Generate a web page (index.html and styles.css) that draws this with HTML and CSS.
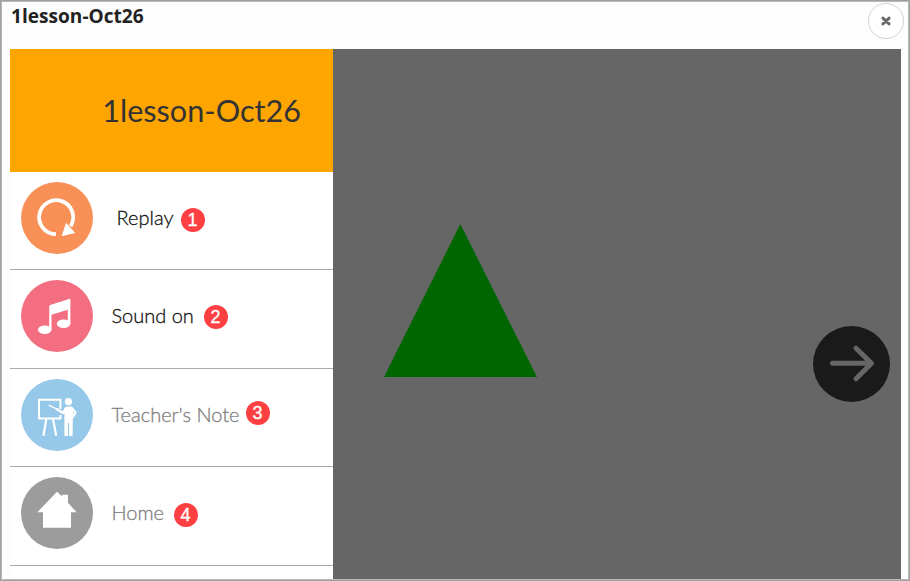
FILE: index.html
```html
<!DOCTYPE html>
<html lang="en">
<head>
<meta charset="utf-8">
<title>1lesson-Oct26</title>
<link rel="stylesheet" href="styles.css">
</head>
<body>
<div class="dialog">
  <header class="dialog-header">
    <h1 class="dialog-title">1lesson-Oct26</h1>
    <button class="close" aria-label="Close">
      <svg width="12" height="12" viewBox="0 0 12 12"><path d="M2.9 3.1l6.2 5.8M9.1 3.1L2.9 8.9" stroke="#666" stroke-width="2.9" stroke-linecap="round"/></svg>
    </button>
  </header>
  <main class="content">
    <nav class="sidebar">
      <div class="lesson-name">1lesson-Oct26</div>
      <div class="item replay">
        <svg class="icon" viewBox="0 0 72 72">
          <circle cx="36" cy="36" r="36" fill="#f89057"/>
          <path d="M35 52.2A17 17 0 1 1 49.6 44.2" fill="none" stroke="#fff" stroke-width="3.8"/>
          <path d="M45 40.7L54.3 51 40.7 54.2Z" fill="#fff"/>
        </svg>
        <span class="label">Replay</span><span class="badge">1</span>
      </div>
      <div class="item sound">
        <svg class="icon" viewBox="0 0 72 72">
          <circle cx="36" cy="36" r="36" fill="#f36e80"/>
          <path d="M28.2 26.2Q28.2 25.2 29.2 24.9L48 18.9Q49.4 18.5 49.4 20V44H46.8V29.8L30.5 34.7V50H28.2Z" fill="#fff"/>
          <ellipse cx="23.7" cy="49.8" rx="6.8" ry="4.2" fill="#fff"/>
          <ellipse cx="42.6" cy="43.8" rx="6.8" ry="4.2" fill="#fff"/>
        </svg>
        <span class="label">Sound on</span><span class="badge">2</span>
      </div>
      <div class="item note muted">
        <svg class="icon" viewBox="0 0 72 72">
          <circle cx="36" cy="36" r="36" fill="#95c8e9"/>
          <path d="M39.4 30V20.7H18V39.5H39.4V36" fill="none" stroke="#fff" stroke-width="2"/>
          <path d="M25.3 40L22.6 56M32 40L35.1 56" stroke="#fff" stroke-width="2.2" stroke-linecap="round"/>
          <path d="M28.2 26.4L36 30.2" stroke="#fff" stroke-width="1.4" stroke-linecap="round"/>
          <path d="M35.5 30L42 34 45 29.5" fill="none" stroke="#fff" stroke-width="2.6" stroke-linejoin="round"/>
          <circle cx="47.4" cy="22.7" r="3.6" fill="#fff"/>
          <path d="M43.4 29Q44 27.4 46 27.4H50Q51.6 27.4 52 29L51.6 56Q51.6 57.2 49.8 57.2T48 56V44H47V56Q47 57.2 45.2 57.2T43.4 56Z" fill="#fff"/>
          <path d="M50.5 28.8L54.4 33.6 51.5 38.4" fill="none" stroke="#fff" stroke-width="2.4" stroke-linejoin="round" stroke-linecap="round"/>
        </svg>
        <span class="label">Teacher's Note</span><span class="badge">3</span>
      </div>
      <div class="item home muted">
        <svg class="icon" viewBox="0 0 72 72">
          <circle cx="36" cy="36" r="36" fill="#9c9c9c"/>
          <path d="M36 14.7L40.7 19 41.6 17.7H47V25.8L55.7 35.3H50V50.7H22V35.3H16.3Z" fill="#fff"/>
        </svg>
        <span class="label">Home</span><span class="badge">4</span>
      </div>
    </nav>
    <section class="stage">
      <svg class="triangle" viewBox="0 0 153 154"><path d="M76.3 0L153 153H0Z" fill="#060"/></svg>
      <button class="next" aria-label="Next">
        <svg width="77" height="76" viewBox="0 0 77 76"><ellipse cx="38.5" cy="38" rx="38.5" ry="38" fill="#1a1a1a"/><path d="M19.5 37.2H58M43 22.2L58.5 37.2 43 52.7" fill="none" stroke="#666" stroke-width="5" stroke-linecap="round" stroke-linejoin="round"/></svg>
      </button>
    </section>
  </main>
</div>
</body>
</html>
```

FILE: styles.css
```css
* { box-sizing: border-box; }
body { margin: 0; font-family: Lato, sans-serif; overflow: hidden; }
.dialog {
  width: 910px;
  height: 581px;
  display: flex;
  flex-direction: column;
  background: #fdfdfd;
  border: 1px solid #a0a0a0;
  box-shadow: inset 0 0 0 1px #b8b8b8;
  padding: 1px 8px 1px 9px;
}
.dialog-header {
  height: 47px;
  flex: none;
  display: flex;
  justify-content: space-between;
}
.dialog-title {
  margin: 1px 0 0 1px;
  font: bold 19.1px/26px "Open Sans", sans-serif;
  color: #222;
}
.close {
  width: 36px;
  height: 36px;
  margin: 1px -3px 0 0;
  padding: 0 1px 0 0;
  display: grid;
  place-items: center;
  border: 1px solid #d3d3d3;
  border-radius: 50%;
  background: #fff;
}
.content { flex: 1; display: flex; min-height: 0; }
.sidebar { width: 323px; background: #fff; overflow: hidden; }
.lesson-name {
  height: 123px;
  padding-right: 32px;
  background: #ffa500;
  color: #333;
  font-size: 30.6px;
  line-height: 124px;
  text-align: right;
}
.item {
  height: 98px;
  padding: 10px 0 0 11px;
  display: flex;
  align-items: flex-start;
  border-bottom: 1px solid #a9a9a9;
  color: #111;
}
.sound, .home { height: 99px; }
.muted { color: #808080; }
.icon { width: 72px; height: 72px; flex: none; }
.label {
  margin-left: 18.5px;
  font-size: 20px;
  font-weight: 300;
  line-height: 71px;
  white-space: nowrap;
  -webkit-text-stroke: 0.3px currentColor;
}
.replay .label { width: 64px; margin-left: 23.5px; }
.sound .label { width: 92px; }
.note .label { width: 134px; }
.home .label { width: 62px; }
.badge {
  width: 24px;
  height: 24px;
  border-radius: 50%;
  background: #ff4043;
  color: #fff;
  font: 18px/25px "Liberation Sans", sans-serif;
  text-align: center;
  -webkit-text-stroke: 0.3px #fff;
}
.replay .badge { margin-top: 26px; }
.sound .badge { margin-top: 25px; }
.note .badge { margin-top: 22px; }
.home .badge { margin-top: 26px; }
.stage {
  flex: 1;
  display: flex;
  justify-content: space-between;
  background: #666;
  padding: 175px 11px 0 51px;
}
.triangle { width: 153px; height: 154px; }
.next { height: 76px; margin: 102px 0 0; padding: 0; border: 0; background: none; }
.next svg { display: block; }
```
